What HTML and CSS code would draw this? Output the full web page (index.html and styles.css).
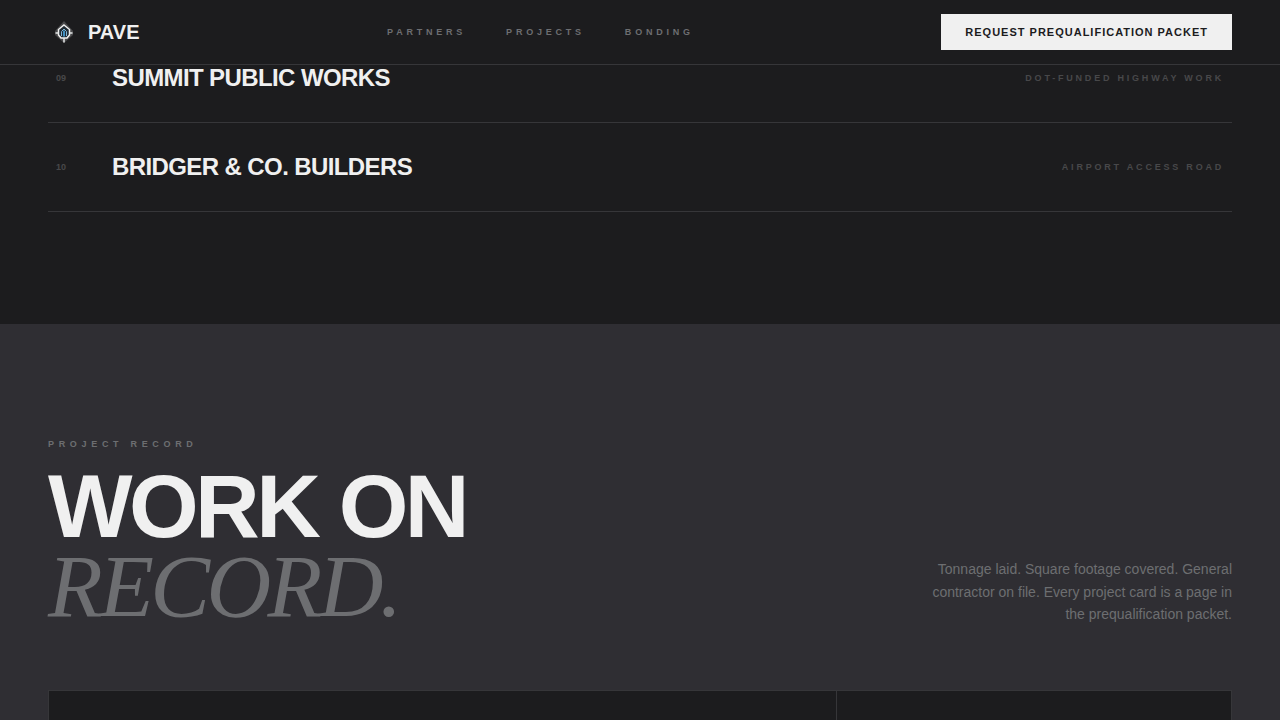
FILE: index.html
```html
<!DOCTYPE html>
<html lang="en">
<head>
<meta charset="utf-8">
<meta name="viewport" content="width=device-width, initial-scale=1.0">
<title>Pave</title>
<link rel="stylesheet" href="styles.css">
</head>
<body>
<header class="nav">
  <a class="logo" href="#">
    <svg class="logo-mark" viewBox="0 0 32 32" aria-hidden="true">
      <path d="M16 5L25 15V19L16 27L7 19V15Z" fill="#48484a"/>
      <path d="M16 9L21.500 13.500V19L19 22H13L10.500 19V13.500Z" fill="#202b33" stroke="#f0f0f0" stroke-width="1.500"/>
      <path d="M7.500 17H11M21 17H24.500M16 22V26.500" stroke="#e4e6e8" stroke-width="1.500"/>
      <path d="M13.500 20V15.500L16 13L18.500 15.500V20" fill="none" stroke="#7fb2d2" stroke-width="1"/>
      <path d="M16 14.500V20.500" stroke="#3f8fc0" stroke-width="2"/>
    </svg>
    <span>PAVE</span>
  </a>
  <nav class="nav-links">
    <a href="#partners">PARTNERS</a>
    <a href="#projects">PROJECTS</a>
    <a href="#bonding">BONDING</a>
  </nav>
  <button class="nav-cta" type="button">REQUEST PREQUALIFICATION PACKET</button>
</header>

<!-- Partners -->
<section class="partners" id="partners">
  <ul class="partner-list">
    <li class="partner">
      <span class="partner-num">09</span>
      <span class="partner-name">SUMMIT PUBLIC WORKS</span>
      <span class="partner-tag">DOT-FUNDED HIGHWAY WORK</span>
    </li>
    <li class="partner">
      <span class="partner-num">10</span>
      <span class="partner-name">BRIDGER &amp; CO. BUILDERS</span>
      <span class="partner-tag">AIRPORT ACCESS ROAD</span>
    </li>
  </ul>
</section>

<!-- Projects -->
<section class="projects" id="projects">
  <div class="projects-head">
    <div>
      <p class="eyebrow">PROJECT RECORD</p>
      <h2>WORK ON<br><em>RECORD.</em></h2>
    </div>
    <p class="projects-intro">Tonnage laid. Square footage covered. General contractor on file. Every project card is a page in the prequalification packet.</p>
  </div>
  <div class="project-grid">
    <article class="project-card"></article>
    <article class="project-card"></article>
  </div>
</section>
</body>
</html>
```
FILE: styles.css
```css
:root {
  --asphalt: #1c1c1e;
  --graphite: #2f2e33;
  --line: #363639;
  --white: #f0f0f0;
  --grey: #6d6e71;
  --dim: #48484a;
}

* {
  box-sizing: border-box;
  margin: 0;
  padding: 0;
}

body {
  display: flex;
  flex-direction: column;
  min-height: 100vh;
  background: var(--asphalt);
  color: var(--white);
  font-family: "Liberation Sans", Arial, sans-serif;
}

a {
  color: inherit;
  text-decoration: none;
}

/* Nav */
.nav {
  position: fixed;
  top: 0;
  left: 0;
  right: 0;
  z-index: 10;
  display: flex;
  align-items: center;
  justify-content: space-between;
  padding: 14px 48px;
  background: var(--asphalt);
  border-bottom: 1px solid var(--line);
}

.logo {
  display: flex;
  align-items: center;
  gap: 8px;
  font-size: 20px;
  font-weight: 700;
}

.logo-mark {
  width: 32px;
  height: 32px;
}

.nav-links {
  display: flex;
  gap: 40px;
  color: var(--grey);
  font-size: 9px;
  font-weight: 700;
  letter-spacing: 0.42em;
}

.nav-cta {
  height: 36px;
  padding: 0 24px;
  border: none;
  background: var(--white);
  color: var(--asphalt);
  font-family: inherit;
  font-size: 11px;
  font-weight: 700;
  letter-spacing: 1px;
  cursor: pointer;
}

/* Partners */
.partners {
  padding: 34px 48px 112px;
}

.partner-list {
  list-style: none;
}

.partner {
  display: grid;
  grid-template-columns: 56px 1fr auto;
  align-items: center;
  padding: 28px 8px;
  border-bottom: 1px solid var(--line);
}

.partner-num {
  color: var(--dim);
  font-size: 9px;
  font-weight: 700;
  line-height: 12px;
}

.partner-name {
  font-size: 24px;
  font-weight: 700;
  line-height: 32px;
  letter-spacing: -0.025em;
}

.partner-tag {
  color: var(--dim);
  font-size: 9px;
  font-weight: 700;
  letter-spacing: 0.31em;
}

/* Projects */
.projects {
  display: flex;
  flex: 1;
  flex-direction: column;
  padding: 112px 48px 0;
  background: var(--graphite);
}

.projects-head {
  display: flex;
  align-items: flex-end;
  justify-content: space-between;
  margin-bottom: 64px;
}

.eyebrow {
  margin-bottom: 15px;
  color: var(--grey);
  font-size: 9px;
  font-weight: 700;
  line-height: 16px;
  letter-spacing: 0.52em;
}

h2 {
  font-size: 7vw;
  font-weight: 700;
  line-height: 0.88;
  letter-spacing: -0.04em;
}

h2 em {
  color: var(--grey);
  font-family: "Liberation Serif", "Times New Roman", serif;
  font-weight: 400;
}

.projects-intro {
  max-width: 320px;
  color: var(--grey);
  font-size: 14px;
  line-height: 1.6;
  text-align: right;
}

.project-grid {
  display: grid;
  flex: 1;
  grid-template-columns: 2fr 1fr;
  gap: 1px;
  border: 1px solid var(--line);
  border-bottom: 0;
  background: var(--line);
}

.project-card {
  background: var(--asphalt);
}
```
